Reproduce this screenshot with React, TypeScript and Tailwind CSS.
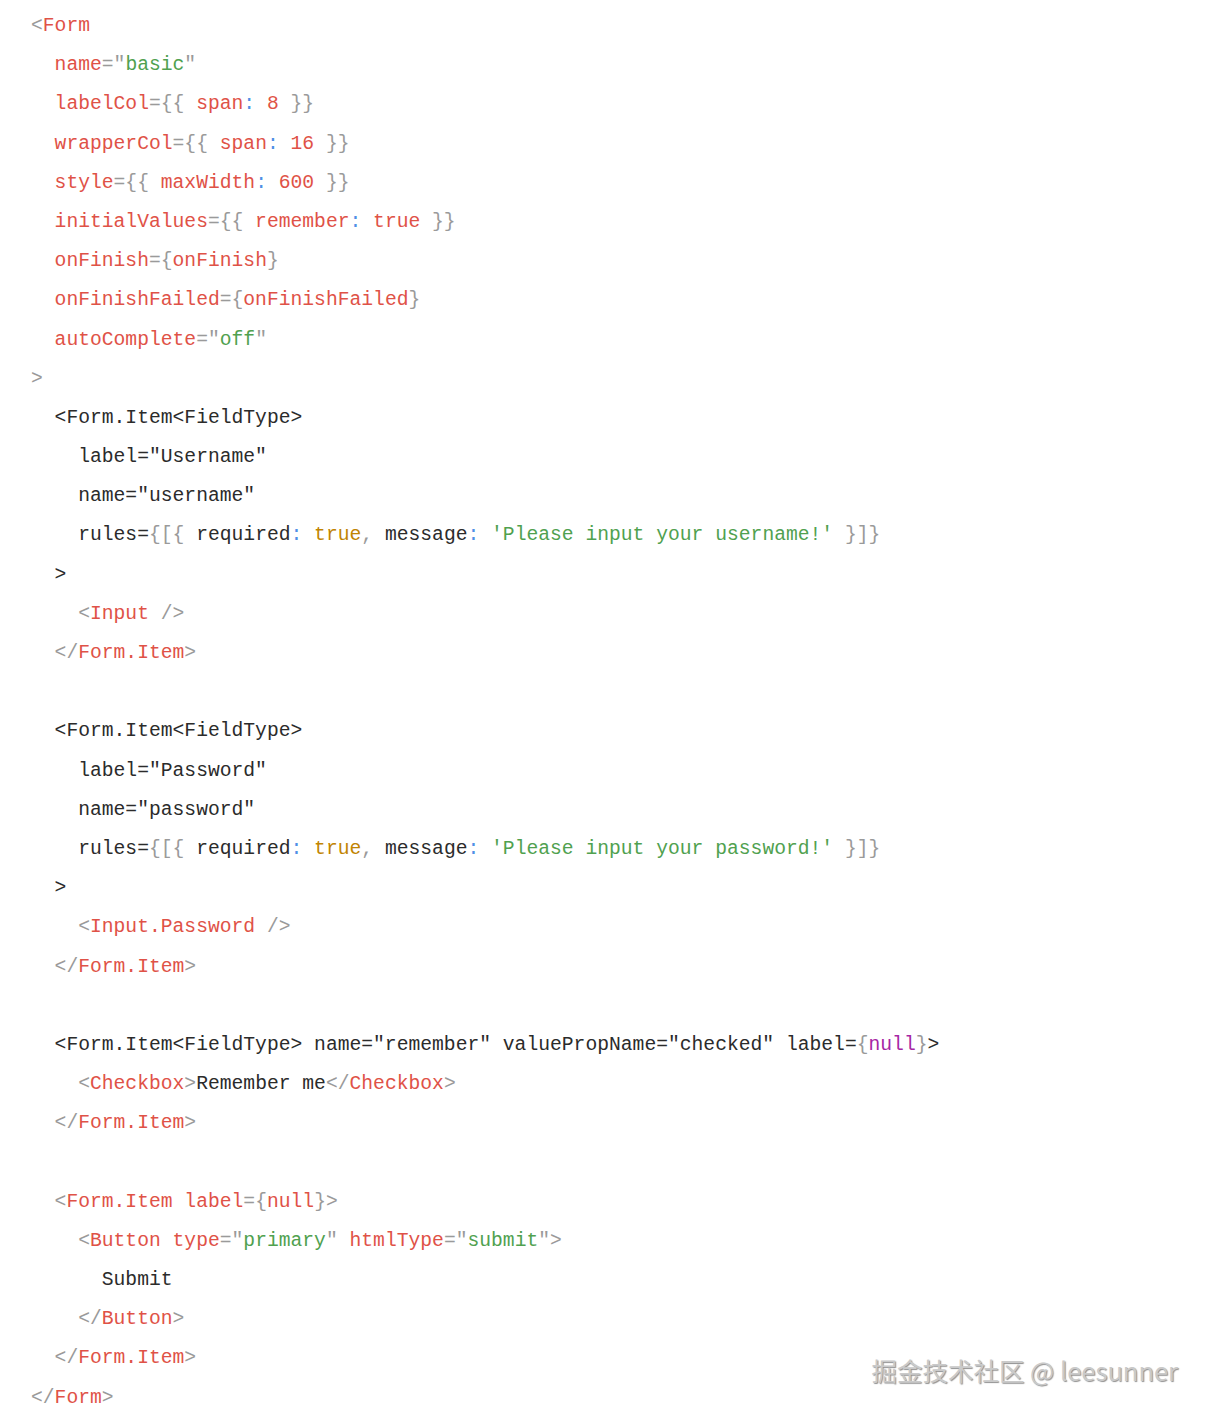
import React from "react";

// token colours, written out so Tailwind picks them up
const R = "text-[#df5247]"; // tags, attributes
const G = "text-[#50a14f]"; // strings
const P = "text-[#9a9a9a]"; // punctuation
const B = "text-[#4f8fe6]"; // colons
const O = "text-[#c18401]"; // booleans
const V = "text-[#a626a4]"; // null
const K = "text-[#2b2b2b]"; // plain text

type Token = [string, string];

const lines: { indent: number; tokens: Token[] }[] = [
  { indent: 0, tokens: [["<", P], ["Form", R]] },
  { indent: 1, tokens: [["name", R], ['="', P], ["basic", G], ['"', P]] },
  { indent: 1, tokens: [["labelCol", R], ["={{", P], [" span", R], [":", B], [" 8", R], [" }}", P]] },
  { indent: 1, tokens: [["wrapperCol", R], ["={{", P], [" span", R], [":", B], [" 16", R], [" }}", P]] },
  { indent: 1, tokens: [["style", R], ["={{", P], [" maxWidth", R], [":", B], [" 600", R], [" }}", P]] },
  { indent: 1, tokens: [["initialValues", R], ["={{", P], [" remember", R], [":", B], [" true", R], [" }}", P]] },
  { indent: 1, tokens: [["onFinish", R], ["={", P], ["onFinish", R], ["}", P]] },
  { indent: 1, tokens: [["onFinishFailed", R], ["={", P], ["onFinishFailed", R], ["}", P]] },
  { indent: 1, tokens: [["autoComplete", R], ['="', P], ["off", G], ['"', P]] },
  { indent: 0, tokens: [[">", P]] },
  { indent: 1, tokens: [["<Form.Item<FieldType>", K]] },
  { indent: 2, tokens: [['label="Username"', K]] },
  { indent: 2, tokens: [['name="username"', K]] },
  {
    indent: 2,
    tokens: [
      ["rules=", K], ["{[{", P], [" required", K], [":", B], [" true", O], [",", P],
      [" message", K], [":", B], [" 'Please input your username!'", G], [" }]}", P],
    ],
  },
  { indent: 1, tokens: [[">", K]] },
  { indent: 2, tokens: [["<", P], ["Input", R], [" />", P]] },
  { indent: 1, tokens: [["</", P], ["Form.Item", R], [">", P]] },
  { indent: 0, tokens: [] },
  { indent: 1, tokens: [["<Form.Item<FieldType>", K]] },
  { indent: 2, tokens: [['label="Password"', K]] },
  { indent: 2, tokens: [['name="password"', K]] },
  {
    indent: 2,
    tokens: [
      ["rules=", K], ["{[{", P], [" required", K], [":", B], [" true", O], [",", P],
      [" message", K], [":", B], [" 'Please input your password!'", G], [" }]}", P],
    ],
  },
  { indent: 1, tokens: [[">", K]] },
  { indent: 2, tokens: [["<", P], ["Input.Password", R], [" />", P]] },
  { indent: 1, tokens: [["</", P], ["Form.Item", R], [">", P]] },
  { indent: 0, tokens: [] },
  {
    indent: 1,
    tokens: [
      ['<Form.Item<FieldType> name="remember" valuePropName="checked" label=', K],
      ["{", P], ["null", V], ["}", P], [">", K],
    ],
  },
  {
    indent: 2,
    tokens: [["<", P], ["Checkbox", R], [">", P], ["Remember me", K], ["</", P], ["Checkbox", R], [">", P]],
  },
  { indent: 1, tokens: [["</", P], ["Form.Item", R], [">", P]] },
  { indent: 0, tokens: [] },
  { indent: 1, tokens: [["<", P], ["Form.Item", R], [" label", R], ["={", P], ["null", R], ["}>", P]] },
  {
    indent: 2,
    tokens: [
      ["<", P], ["Button", R], [" type", R], ['="', P], ["primary", G], ['"', P],
      [" htmlType", R], ['="', P], ["submit", G], ['">', P],
    ],
  },
  { indent: 3, tokens: [["Submit", K]] },
  { indent: 2, tokens: [["</", P], ["Button", R], [">", P]] },
  { indent: 1, tokens: [["</", P], ["Form.Item", R], [">", P]] },
  { indent: 0, tokens: [["</", P], ["Form", R], [">", P]] },
];

const App = () => {
  return (
    <div className="relative min-h-[1420px] w-full bg-white">
      <pre className="pl-[31px] pt-[7px] font-['Liberation_Mono',monospace] text-[19.66px] leading-[39.2px]">
        {lines.map((line, i) => (
          <div key={i} className="h-[39.2px] whitespace-pre">
            {"  ".repeat(line.indent)}
            {line.tokens.map(([text, color], j) => (
              <span key={j} className={color}>
                {text}
              </span>
            ))}
          </div>
        ))}
      </pre>

      {/* watermark */}
      <div className="absolute right-[34px] top-[1352px] font-['Noto_Sans_CJK_SC',sans-serif] text-[25.5px] leading-[36px] text-[#cacaca] [text-shadow:1px_1px_1px_rgba(70,70,70,0.6)]">
        掘金技术社区 @ leesunner
      </div>
    </div>
  );
};

export default App;
